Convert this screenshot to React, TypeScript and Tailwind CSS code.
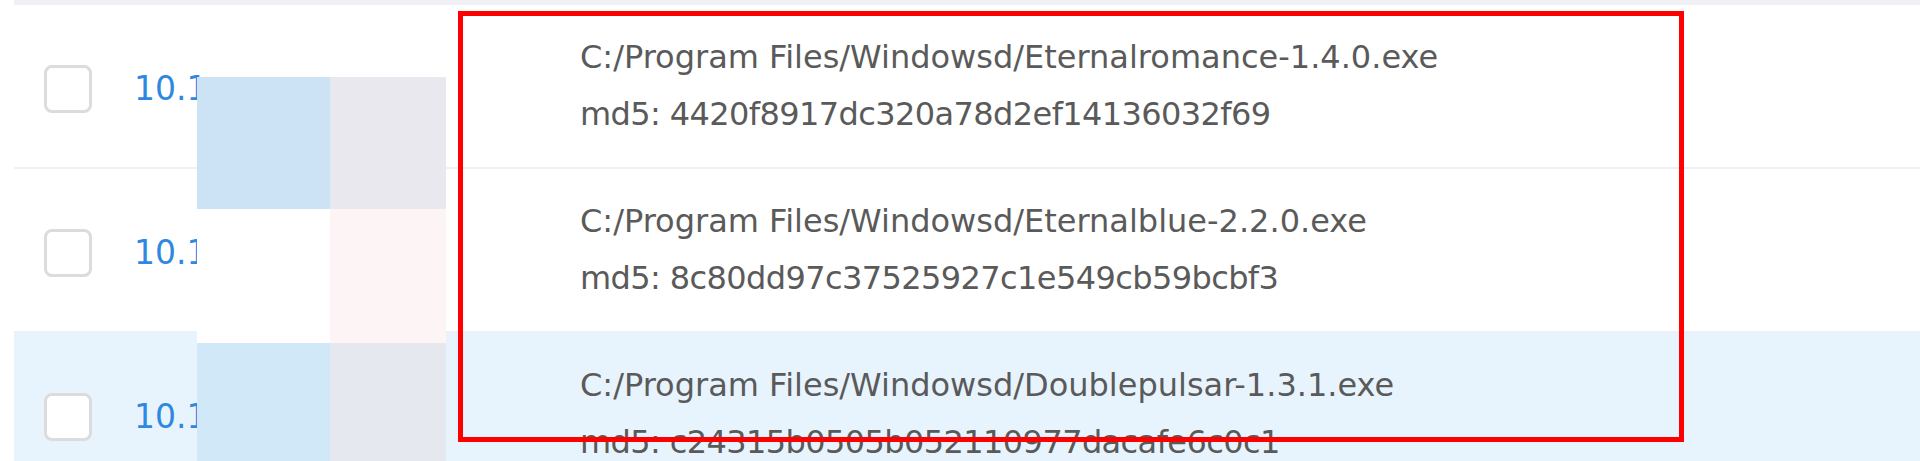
const files = [
  {
    path: "C:/Program Files/Windowsd/Eternalromance-1.4.0.exe",
    md5: "4420f8917dc320a78d2ef14136032f69",
  },
  {
    path: "C:/Program Files/Windowsd/Eternalblue-2.2.0.exe",
    md5: "8c80dd97c37525927c1e549cb59bcbf3",
  },
  {
    path: "C:/Program Files/Windowsd/Doublepulsar-1.3.1.exe",
    md5: "c24315b0505b052110977dacafe6c0c1",
    hover: true,
  },
];

function Row({ path, md5, hover }: { path: string; md5: string; hover?: boolean }) {
  return (
    <div
      className={`flex h-[164px] items-center border-b-2 border-[#edf0f4] ${
        hover ? "bg-[#e8f4fd]" : "bg-white"
      }`}
    >
      {/* checkbox */}
      <div className="w-[108px] shrink-0 pl-[30px]">
        <div className="mt-[6px] h-[48px] w-[48px] rounded-[8px] border-[3px] border-[#dcdcdc] bg-white" />
      </div>

      {/* ip, mostly hidden under the redaction */}
      <div className="w-[458px] shrink-0 pl-[12px]">
        <span className="mt-[5px] block text-[33px] leading-none text-[#2f88e0]">10.1</span>
      </div>

      {/* file + hash */}
      <div className="text-[32px] leading-[57px] text-[#5a5a5a] whitespace-nowrap">
        <div>{path}</div>
        <div className="tracking-[-0.6px]">md5: {md5}</div>
      </div>
    </div>
  );
}

export default function App() {
  return (
    <div className="relative h-[461px] w-full overflow-hidden bg-white font-['DejaVu_Sans',sans-serif]">
      <div className="ml-[14px]">
        <div className="h-[5px] bg-[#eff1f4]" />
        {files.map((f) => (
          <Row key={f.md5} {...f} />
        ))}
      </div>

      {/* redacted blocks over the ip column */}
      <div className="absolute left-[197px] top-[77px] grid grid-cols-[133px_116px] grid-rows-[132px_134px_118px]">
        <div className="bg-[#cce2f5]" />
        <div className="bg-[#e9e8ee]" />
        <div className="bg-white" />
        <div className="bg-[#fdf5f5]" />
        <div className="bg-[#d1e8f8]" />
        <div className="bg-[#e6e8ef]" />
      </div>

      {/* annotation frame */}
      <div className="absolute left-[458px] top-[11px] h-[431px] w-[1226px] border-[5px] border-[#ff0000]" />
    </div>
  );
}
